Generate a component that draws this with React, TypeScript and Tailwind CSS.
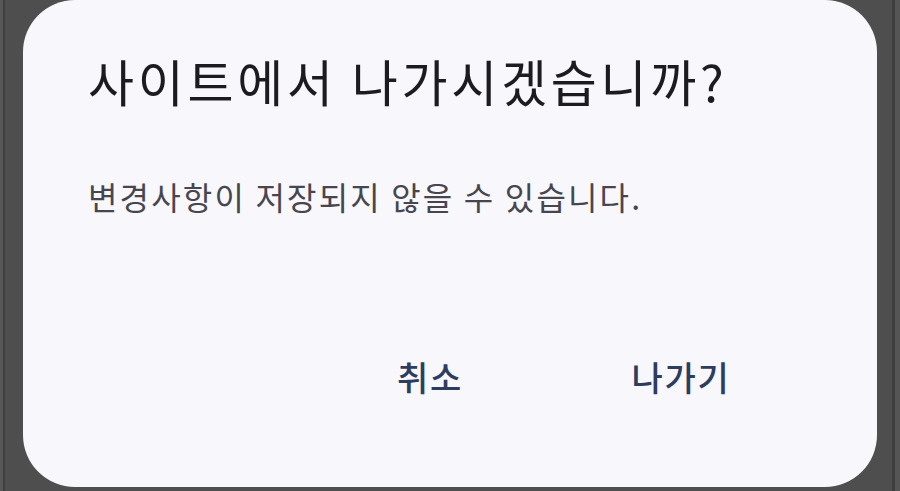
import React from 'react';

const font = { fontFamily: '"Noto Sans CJK KR", "Noto Sans", sans-serif' };

export default function App() {
  return (
    <div className="flex h-[491px] w-[900px] overflow-hidden bg-[#4e4e4e]" style={font}>
      <div className="h-full w-[3px] bg-[#575757]" />
      <div className="h-full w-[2px] bg-[#3f3f3f]" />
      <div className="flex h-full flex-1 pl-[18px] pr-[15px]">
        <div className="flex h-[487px] w-[854px] flex-col rounded-[52px] bg-[#f7f7fc] pl-[65px]">
          <h1 className="mt-[50px] text-[50px] font-normal leading-[60px] tracking-[0.075em] text-[#1c1b1f]">
            사이트에서 나가시겠습니까?
          </h1>
          <p className="mt-[66px] text-[32px] leading-[40px] tracking-[0.068em] text-[#47464f]">
            변경사항이 저장되지 않을 수 있습니다.
          </p>
          <div className="mt-[141px] flex justify-end gap-[91px] pr-[116px]">
            <button className="w-[160px] text-center text-[34px] font-medium leading-[40px] tracking-[0.05em] text-[#2d3d5f]">
              취소
            </button>
            <button className="w-[160px] text-center text-[34px] font-medium leading-[40px] tracking-[0.05em] text-[#2d3d5f]">
              나가기
            </button>
          </div>
        </div>
      </div>
      <div className="h-full w-[3px] bg-[#3f3f3f]" />
      <div className="h-full w-[5px] bg-[#555555]" />
    </div>
  );
}
